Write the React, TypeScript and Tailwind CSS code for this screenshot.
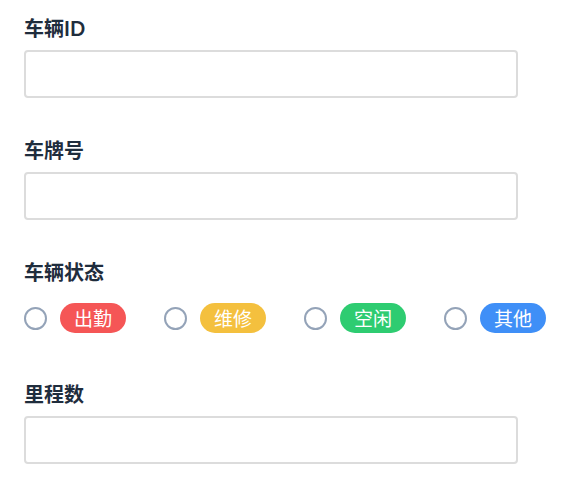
const statuses = [
  { label: "出勤", color: "bg-[#f55656]" },
  { label: "维修", color: "bg-[#f4c03e]" },
  { label: "空闲", color: "bg-[#2ecc71]" },
  { label: "其他", color: "bg-[#3f8ff7]" },
];

function Field({ label, children }: { label: string; children: React.ReactNode }) {
  return (
    <div className="mb-[38px]">
      <label className="mb-2 block h-7 text-[20px] font-bold leading-7 text-[#1f2d3d]">{label}</label>
      {children}
    </div>
  );
}

function TextInput() {
  return (
    <input
      type="text"
      className="block h-12 w-[494px] rounded-[4px] border-2 border-[#dcdcdc] bg-white px-3 text-base outline-none"
    />
  );
}

export default function App() {
  return (
    <main
      className="min-h-screen bg-white px-6 pt-[14px]"
      style={{ fontFamily: 'Lato, "Noto Sans CJK SC", sans-serif' }}
    >
      <Field label="车辆ID">
        <TextInput />
      </Field>
      <Field label="车牌号">
        <TextInput />
      </Field>
      <Field label="车辆状态">
        <div className="flex h-12 items-center">
          {statuses.map((s) => (
            <label key={s.label} className="flex w-[140px] shrink-0 items-center gap-[13px]">
              <span className="h-[23px] w-[23px] rounded-full border-2 border-[#94a3b8] bg-white" />
              <span
                className={`${s.color} rounded-full px-[14px] text-[19px] leading-[30px] text-white`}
                style={{ fontFamily: '"Noto Sans CJK SC", sans-serif' }}
              >
                {s.label}
              </span>
            </label>
          ))}
        </div>
      </Field>
      <Field label="里程数">
        <TextInput />
      </Field>
    </main>
  );
}
